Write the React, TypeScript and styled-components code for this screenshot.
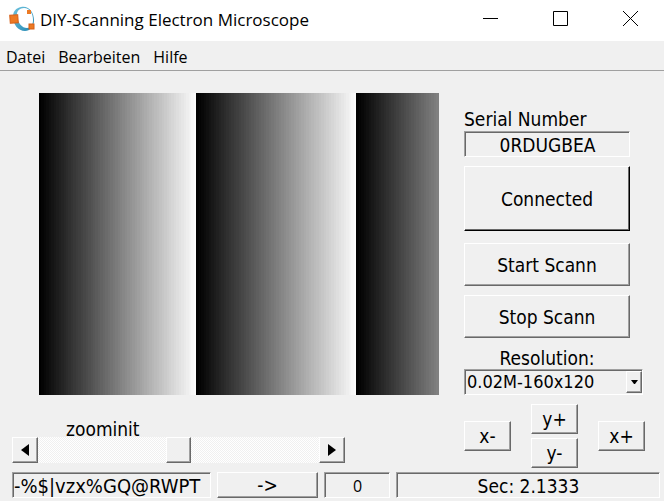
import React, { useState } from "react";
import styled, { createGlobalStyle, css } from "styled-components";

const uiFont = '"DejaVu Sans Condensed", "DejaVu Sans", sans-serif';
const titleFont = '"Open Sans", sans-serif';

const GlobalStyle = createGlobalStyle`
  * { box-sizing: border-box; }
  body { margin: 0; background: #f0f0f0; color: #000; }
  button, input, select, output { font: inherit; color: inherit; border-radius: 0; }
`;

const raised = css`
  border: 1px solid;
  border-color: #fff #696969 #696969 #fff;
  background: #f0f0f0;
  box-shadow: inset -1px -1px #a0a0a0;
`;

const sunken = css`
  border: 1px solid;
  border-color: #a0a0a0 #fff #fff #a0a0a0;
  background: #f0f0f0;
  box-shadow: inset 1px 1px #696969;
`;

const Window = styled.div`
  min-height: 100vh;
  display: flex;
  flex-direction: column;
  font: 19px/22px ${uiFont};
`;

const TitleBar = styled.header`
  display: flex;
  align-items: center;
  height: 41px;
  padding: 0 12px 4px 9px;
  background: #fff;
`;

const Title = styled.h1`
  flex: 1;
  margin: 2px 0 0 5px;
  font: 400 17px/24px ${titleFont};
  white-space: nowrap;
`;

const WindowControls = styled.div`
  display: flex;
  gap: 26px;
`;

const WindowButton = styled.button`
  display: grid;
  place-items: center;
  width: 44px;
  height: 30px;
  padding: 0;
  border: 0;
  background: none;
`;

const MenuBar = styled.nav`
  display: flex;
  gap: 13px;
  height: 30px;
  padding: 4px 6px;
  border-bottom: 1px solid #a0a0a0;
`;

const MenuItem = styled.button`
  padding: 0;
  border: 0;
  background: none;
  font: 16px/24px ${titleFont};
`;

const Content = styled.main`
  display: grid;
  grid-template-columns: minmax(0, 1fr) 181px;
  column-gap: 25px;
  padding: 22px 19px 4px 12px;
`;

const ScanColumn = styled.section`
  display: flex;
  flex-direction: column;
`;

const ScanImage = styled.svg`
  display: block;
  width: calc(100% - 27px);
  height: 302px;
  margin-left: 27px;
`;

const ZoomLabel = styled.label`
  margin: 23px 0 0 54px;
  height: 19px;
`;

const ScrollBar = styled.div`
  display: flex;
  width: 78%;
  height: 26px;
`;

const ArrowButton = styled.button`
  ${raised}
  display: grid;
  place-items: center;
  flex: none;
  width: 26px;
  padding: 0;
`;

const ScrollTrack = styled.input`
  flex: 1;
  min-width: 0;
  height: 26px;
  margin: 0;
  appearance: none;
  background: repeating-conic-gradient(#f0f0f0 0 25%, #fff 0 50%) 0 0 / 2px 2px;

  &::-webkit-slider-thumb {
    ${raised}
    appearance: none;
    width: 25px;
    height: 26px;
  }
`;

const ControlColumn = styled.section`
  display: flex;
  flex-direction: column;
  padding-top: 15px;
`;

const Field = styled.output`
  ${sunken}
  display: block;
  height: 26px;
  padding-left: 1px;
  line-height: 26px;
  text-align: center;
  white-space: nowrap;
  overflow: hidden;
`;

const SerialField = styled(Field)`
  width: 166px;
  margin: 1px 0 9px;
`;

const PushButton = styled.button<{ $height?: number; $gap?: number; $default?: boolean }>`
  ${raised}
  width: 166px;
  height: ${(p) => p.$height ?? 43}px;
  margin-bottom: ${(p) => p.$gap ?? 9}px;
  padding: 1px 0 0;
  ${(p) =>
    p.$default &&
    css`
      border-right-color: #000;
      border-bottom-color: #000;
      box-shadow: inset -1px -1px #696969;
    `}
`;

const ResolutionLabel = styled.label`
  width: 166px;
  text-align: center;
`;

const SelectFrame = styled.div`
  ${sunken}
  display: grid;
  width: 179px;
  height: 26px;
  margin-bottom: 9px;
  padding: 1px 0 0 1px;
  font-size: 18px;
`;

const ResolutionSelect = styled.select`
  grid-area: 1 / 1;
  width: 100%;
  height: 22px;
  padding: 0 0 0 1px;
  border: 0;
  appearance: none;
  background: transparent;
`;

const SelectArrow = styled.span`
  ${raised}
  grid-area: 1 / 1;
  justify-self: end;
  display: grid;
  place-items: center;
  width: 16px;
  height: 22px;
  pointer-events: none;
`;

const MovePad = styled.div`
  display: grid;
  grid-template-columns: repeat(3, 47px);
  justify-content: space-between;
  align-items: center;
`;

const MoveStack = styled.div`
  display: grid;
  gap: 4px;
`;

const MoveButton = styled.button`
  ${raised}
  width: 47px;
  height: 30px;
  padding: 0;
`;

const StatusBar = styled.footer`
  display: grid;
  grid-template-columns: 199px 101px 66px minmax(0, 1fr);
  gap: 6px;
  padding: 0 4px 3px 12px;
`;

const SerialData = styled(Field)`
  font-size: 20px;
  text-align: left;
`;

const Counter = styled(Field)`
  font-family: ${titleFont};
  font-size: 16px;
`;

const SendButton = styled.button`
  ${raised}
  height: 26px;
  padding: 0;
`;

const SWEEPS = [
  { start: 0, width: 157, levels: 64, peak: 250 },
  { start: 157, width: 160, levels: 64, peak: 250 },
  { start: 317, width: 83, levels: 33, peak: 128 },
];

function ScanPreview() {
  return (
    <ScanImage viewBox="0 0 400 302" preserveAspectRatio="none" shapeRendering="crispEdges" role="img" aria-label="Scan">
      {SWEEPS.flatMap(({ start, width, levels, peak }) =>
        Array.from({ length: levels }, (_, i) => {
          const left = Math.round((width * i) / levels);
          const right = Math.round((width * (i + 1)) / levels);
          const level = Math.round((peak * i) / (levels - 1));
          return (
            <rect
              key={`${start}-${i}`}
              x={start + left}
              y="0"
              width={right - left}
              height="302"
              fill={`rgb(${level},${level},${level})`}
            />
          );
        }),
      )}
    </ScanImage>
  );
}

function OctaveLogo() {
  return (
    <svg width="26" height="26" viewBox="0 0 26 26" aria-hidden="true">
      <defs>
        <linearGradient id="ring" x1="0" y1="0" x2="1" y2="1">
          <stop offset="0" stopColor="#6fc4e0" />
          <stop offset="1" stopColor="#2386b0" />
        </linearGradient>
      </defs>
      <path
        fill="url(#ring)"
        fillRule="evenodd"
        d="M12 1C20 -1 25 7 25 14C25 21 21 25 16 25C9 25 4 18 4 11C4 5 7 2 12 1ZM15 2C10 2 7 6 8 11C9 17 13 22 18 22C22 22 24 19 24 14C24 8 21 2 15 2Z"
      />
      <rect x="1" y="9" width="8" height="8" fill="#ec7a24" stroke="#d65f16" transform="rotate(-4 5 13)" />
      <rect x="18" y="4" width="4" height="4" fill="#ec7a24" />
      <rect x="20" y="18" width="5" height="5" fill="#ec7a24" stroke="#d65f16" />
    </svg>
  );
}

export default function App() {
  const [zoom, setZoom] = useState(50);

  return (
    <>
      <GlobalStyle />
      <Window>
        <TitleBar>
          <OctaveLogo />
          <Title>DIY-Scanning Electron Microscope</Title>
          <WindowControls>
            <WindowButton aria-label="Minimize">
              <svg width="15" height="15"><path d="M0 7.5H15" stroke="#000" /></svg>
            </WindowButton>
            <WindowButton aria-label="Maximize">
              <svg width="15" height="15"><path d="M.5 .5H14.5V14.5H.5Z" fill="none" stroke="#000" /></svg>
            </WindowButton>
            <WindowButton aria-label="Close">
              <svg width="15" height="15"><path d="M0 0L15 15M15 0L0 15" stroke="#000" /></svg>
            </WindowButton>
          </WindowControls>
        </TitleBar>
        <MenuBar>
          <MenuItem>Datei</MenuItem>
          <MenuItem>Bearbeiten</MenuItem>
          <MenuItem>Hilfe</MenuItem>
        </MenuBar>
        <Content>
          <ScanColumn>
            <ScanPreview />
            <ZoomLabel htmlFor="zoom">zoominit</ZoomLabel>
            <ScrollBar>
              <ArrowButton aria-label="Decrease zoom" onClick={() => setZoom((z) => Math.max(0, z - 1))}>
                <svg width="8" height="12"><path d="M8 0V12L0 6Z" /></svg>
              </ArrowButton>
              <ScrollTrack id="zoom" type="range" value={zoom} onChange={(e) => setZoom(Number(e.target.value))} />
              <ArrowButton aria-label="Increase zoom" onClick={() => setZoom((z) => Math.min(100, z + 1))}>
                <svg width="8" height="12"><path d="M0 0V12L8 6Z" /></svg>
              </ArrowButton>
            </ScrollBar>
          </ScanColumn>
          <ControlColumn>
            <label htmlFor="serial">Serial Number</label>
            <SerialField id="serial">0RDUGBEA</SerialField>
            <PushButton $height={65} $gap={12} $default>Connected</PushButton>
            <PushButton>Start Scann</PushButton>
            <PushButton>Stop Scann</PushButton>
            <ResolutionLabel htmlFor="resolution">Resolution:</ResolutionLabel>
            <SelectFrame>
              <ResolutionSelect id="resolution">
                <option>0.02M-160x120</option>
              </ResolutionSelect>
              <SelectArrow>
                <svg width="7" height="4"><path d="M0 0H7L4 4H3Z" /></svg>
              </SelectArrow>
            </SelectFrame>
            <MovePad>
              <MoveButton>x-</MoveButton>
              <MoveStack>
                <MoveButton>y+</MoveButton>
                <MoveButton>y-</MoveButton>
              </MoveStack>
              <MoveButton>x+</MoveButton>
            </MovePad>
          </ControlColumn>
        </Content>
        <StatusBar>
          <SerialData>-%$|vzx%GQ@RWPT</SerialData>
          <SendButton>-&gt;</SendButton>
          <Counter>0</Counter>
          <Field>Sec: 2.1333</Field>
        </StatusBar>
      </Window>
    </>
  );
}
